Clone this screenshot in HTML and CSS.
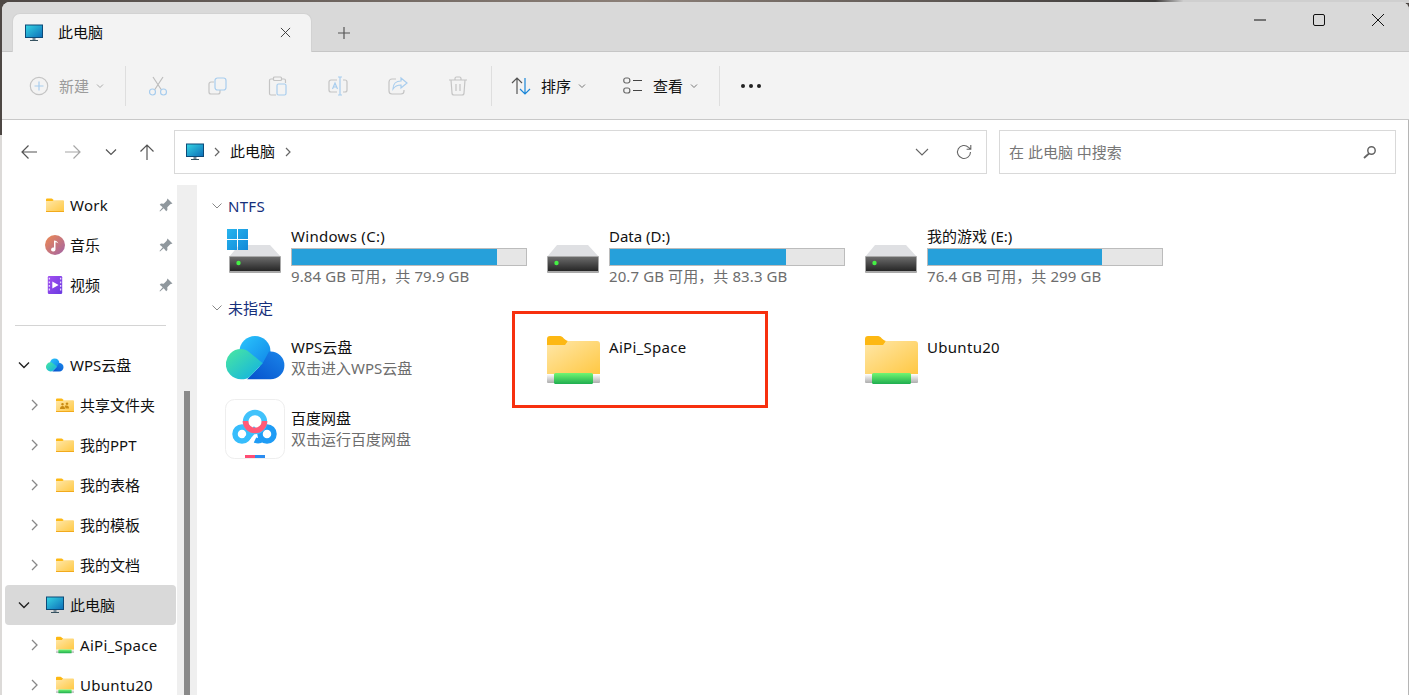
FILE: index.html

```html
<!DOCTYPE html>
<html lang="zh-CN">
<head>
    <meta charset="UTF-8">
    <title>此电脑 - 文件资源管理器</title>
    <link rel="stylesheet" href="styles.css">
</head>
<body>

    <!-- shared icons -->
    <svg class="defs">
        <defs>
            <linearGradient id="gradScreen" x1="0" y1="0" x2="1" y2="1"><stop offset="0" stop-color="#36d6e4"/><stop offset="1" stop-color="#0c6db8"/></linearGradient>
            <linearGradient id="gradFolder" x1="0" y1="0" x2="1" y2="1"><stop offset="0" stop-color="#ffe7a8"/><stop offset="1" stop-color="#ffc843"/></linearGradient>
            <linearGradient id="gradGreen" x1="0" y1="0" x2="0" y2="1"><stop offset="0" stop-color="#72f572"/><stop offset="1" stop-color="#1fae50"/></linearGradient>
            <linearGradient id="gradStrip" x1="0" y1="0" x2="0" y2="1"><stop offset="0" stop-color="#ffffff"/><stop offset="1" stop-color="#aeaeae"/></linearGradient>
            <linearGradient id="gradDrive" x1="0" y1="0" x2="0" y2="1"><stop offset="0" stop-color="#6b6b6b"/><stop offset="1" stop-color="#262626"/></linearGradient>
            <linearGradient id="gradCloud" x1="0" y1="0" x2="1" y2="1"><stop offset="0" stop-color="#2bc6fc"/><stop offset="1" stop-color="#0f84e8"/></linearGradient>
            <linearGradient id="gradTeal" x1="0" y1="0" x2="1" y2="1"><stop offset="0" stop-color="#4be8a0"/><stop offset="1" stop-color="#0eaee6"/></linearGradient>
            <linearGradient id="gradDeep" x1="0" y1="1" x2="1" y2="0"><stop offset="0" stop-color="#0650cc"/><stop offset="1" stop-color="#1a86ea"/></linearGradient>
            <linearGradient id="gradMusic" x1="0" y1="0" x2="1" y2="1"><stop offset="0" stop-color="#ef8a4f"/><stop offset="1" stop-color="#a163a8"/></linearGradient>
            <linearGradient id="gradVideo" x1="0" y1="0" x2="1" y2="1"><stop offset="0" stop-color="#a24ff0"/><stop offset="1" stop-color="#6a3ae0"/></linearGradient>
            <linearGradient id="gradWin" x1="0" y1="0" x2="1" y2="1"><stop offset="0" stop-color="#27b4ee"/><stop offset="1" stop-color="#1289d8"/></linearGradient>

            <symbol id="pc" viewBox="0 0 18 18">
                <rect x="0.5" y="1" width="17" height="12.5" fill="url(#gradScreen)" stroke="#0d4a78"/>
                <rect x="7.5" y="14" width="3" height="2" fill="#7a8a96"/>
                <rect x="5" y="16" width="8" height="1" fill="#35515f"/>
            </symbol>
            <symbol id="folder" viewBox="0 0 18 18">
                <path d="M0 5V3.500a1 1 0 0 1 1-1h4.500c1 0 1.500 1.300 2.500 1.800L7 5z" fill="#fdb813"/>
                <path d="M0 5h6.500l1-.7H17a1 1 0 0 1 1 1V15a1 1 0 0 1-1 1H1a1 1 0 0 1-1-1z" fill="url(#gradFolder)"/>
                <rect x="0" y="15" width="18" height="1" fill="#f2aa1c"/>
            </symbol>
            <symbol id="netfolder" viewBox="0 0 53 48">
                <path d="M0 9V3a3 3 0 0 1 3-3h10c3 0 4 4 8 5l-2 4z" fill="#fdb813"/>
                <path d="M0 9h18l3-4h29a3 3 0 0 1 3 3v30H0z" fill="url(#gradFolder)"/>
                <rect x="0" y="38" width="53" height="9" rx="1" fill="url(#gradStrip)"/>
                <rect x="7" y="37" width="39" height="11" rx="1.500" fill="url(#gradGreen)"/>
            </symbol>
            <symbol id="drive" viewBox="0 0 60 60">
                <path d="M13 19h31l11 12H3z" fill="#dfe0e3"/>
                <rect x="3" y="30" width="52" height="17" rx="1" fill="#a9a9a9"/>
                <rect x="4" y="31" width="50" height="14" fill="url(#gradDrive)"/>
                <circle cx="12.500" cy="37" r="2.200" fill="#45f045"/>
            </symbol>
            <symbol id="wps" viewBox="0 0 60 60">
                <circle cx="29" cy="23.500" r="15.500" fill="url(#gradCloud)"/>
                <path d="M21 51.300H44.500a13.900 13.900 0 0 0 0-27.800h-1.500L36.700 35.300z" fill="url(#gradDeep)"/>
                <path d="M15 21c3 0 6 1 8 3L36.700 35.300 24 48.500c-2 2-5 2.800-9 2.800a15.150 15.150 0 0 1 0-30.300z" fill="url(#gradTeal)"/>
            </symbol>
            <symbol id="pin" viewBox="0 0 14 14">
                <path d="M8.500 0.500l5 5-2.200.8-3 3 .1 2.700-1.200 1.200-2.500-3L1 13.500 0.500 13l3.200-3.700-3-2.500L2 5.600l2.700.1 3-3z" fill="#8f979d"/>
            </symbol>
            <symbol id="chev-down" viewBox="0 0 14 14">
                <path d="M2 4.500l5 5 5-5" fill="none" stroke="#222" stroke-width="1.400"/>
            </symbol>
            <symbol id="chev-right" viewBox="0 0 14 14">
                <path d="M5 2l5 5-5 5" fill="none" stroke="#888" stroke-width="1.300"/>
            </symbol>
        </defs>
    </svg>

    <div class="window">

        <div class="tabbar">
            <div class="tab">
                <svg class="ic18"><use href="#pc"/></svg>
                <span class="tab-title">此电脑</span>
                <svg class="tab-close" viewBox="0 0 12 12"><path d="M1 1l10 10M11 1L1 11" stroke="#333" fill="none"/></svg>
            </div>
            <svg class="tab-plus" viewBox="0 0 12 12"><path d="M6 0v12M0 6h12" stroke="#555" stroke-width="1.200" fill="none"/></svg>
            <div class="win-controls">
                <div class="win-btn"><svg viewBox="0 0 14 14"><path d="M1 7h12" stroke="#111" fill="none"/></svg></div>
                <div class="win-btn"><svg viewBox="0 0 14 14"><rect x="1.500" y="1.500" width="11" height="11" rx="1.500" stroke="#111" fill="none"/></svg></div>
                <div class="win-btn"><svg viewBox="0 0 14 14"><path d="M1 1l12 12M13 1L1 13" stroke="#111" fill="none"/></svg></div>
            </div>
        </div>

        <div class="toolbar">
            <div class="tool tool-new">
                <svg class="ic20" viewBox="0 0 20 20"><circle cx="10" cy="10" r="8.700" fill="none" stroke="#c4c4c4" stroke-width="1.200"/><path d="M10 5.500v9M5.500 10h9" stroke="#a8cdee" stroke-width="1.200"/></svg>
                <span class="tool-label off">新建</span>
                <svg class="caret" viewBox="0 0 8 8"><path d="M1 2.500l3 3 3-3" stroke="#aaa" fill="none"/></svg>
            </div>
            <div class="tool-sep"></div>
            <div class="tool-icons">
                <svg class="ic20" viewBox="0 0 20 20"><path d="M5 1l8.500 13M15 1L6.500 14" stroke="#bdbdbd" fill="none" stroke-width="1.200"/><circle cx="4.500" cy="16" r="3" fill="none" stroke="#a8cdee" stroke-width="1.200"/><circle cx="15.500" cy="16" r="3" fill="none" stroke="#a8cdee" stroke-width="1.200"/></svg>
                <svg class="ic20" viewBox="0 0 20 20"><path d="M6 6H3a2 2 0 0 0-2 2v8a2 2 0 0 0 2 2h7a2 2 0 0 0 2-2v-2" fill="none" stroke="#c4c4c4" stroke-width="1.200"/><rect x="7" y="2" width="11" height="12" rx="2.500" fill="none" stroke="#a8cdee" stroke-width="1.200"/></svg>
                <svg class="ic20" viewBox="0 0 20 20"><path d="M5 3H3a1.500 1.500 0 0 0-1.500 1.500v13A1.500 1.500 0 0 0 3 19h5M14 3h2a1.500 1.500 0 0 1 1.500 1.500V7" fill="none" stroke="#c4c4c4" stroke-width="1.200"/><rect x="5.500" y="1" width="8" height="3.500" rx="1" fill="none" stroke="#c4c4c4" stroke-width="1.200"/><rect x="9" y="8" width="9" height="11" rx="1.500" fill="none" stroke="#a8cdee" stroke-width="1.200"/></svg>
                <svg class="ic20" viewBox="0 0 20 20"><path d="M9 4H3a2 2 0 0 0-2 2v8a2 2 0 0 0 2 2h6M15 4h2a2 2 0 0 1 2 2v8a2 2 0 0 1-2 2h-2" fill="none" stroke="#c4c4c4" stroke-width="1.200"/><path d="M10 1h4M10 19h4M12 1v18M4.500 13l2.500-6 2.500 6M5.500 11h3" fill="none" stroke="#a8cdee" stroke-width="1.200"/></svg>
                <svg class="ic20" viewBox="0 0 20 20"><path d="M8 3H4a3 3 0 0 0-3 3v9a3 3 0 0 0 3 3h9a3 3 0 0 0 3-3v-1" fill="none" stroke="#c4c4c4" stroke-width="1.200"/><path d="M13 2l6 5-6 5V9c-4 0-6 1-8 4 0-5 3-8 8-8z" fill="none" stroke="#a8cdee" stroke-width="1.200"/></svg>
                <svg class="ic20" viewBox="0 0 20 20"><path d="M1 4h18M7 4V2.500A1.500 1.500 0 0 1 8.500 1h3A1.500 1.500 0 0 1 13 2.500V4M3 4l1 13a2 2 0 0 0 2 2h8a2 2 0 0 0 2-2l1-13M8 8v7M12 8v7" fill="none" stroke="#c4c4c4" stroke-width="1.200"/></svg>
            </div>
            <div class="tool-sep"></div>
            <div class="tool tool-sort">
                <svg class="ic20" viewBox="0 0 20 20"><path d="M6 18V2M1 7l5-5 5 5" fill="none" stroke="#555" stroke-width="1.200"/><path d="M14 2v16M9 13l5 5 5-5" fill="none" stroke="#1a86d8" stroke-width="1.200"/></svg>
                <span class="tool-label">排序</span>
                <svg class="caret" viewBox="0 0 8 8"><path d="M1 2.500l3 3 3-3" stroke="#777" fill="none"/></svg>
            </div>
            <div class="tool tool-view">
                <svg class="ic20" viewBox="0 0 20 20"><rect x="0.800" y="2" width="6" height="5" rx="2" fill="none" stroke="#666" stroke-width="1.200"/><rect x="0.800" y="12" width="6" height="5" rx="2" fill="none" stroke="#666" stroke-width="1.200"/><path d="M10 4.500h9M10 14.500h9" stroke="#444" stroke-width="1.200"/></svg>
                <span class="tool-label">查看</span>
                <svg class="caret" viewBox="0 0 8 8"><path d="M1 2.500l3 3 3-3" stroke="#777" fill="none"/></svg>
            </div>
            <div class="tool-sep"></div>
            <svg class="tool-more" viewBox="0 0 22 6"><circle cx="3" cy="3" r="2" fill="#222"/><circle cx="11" cy="3" r="2" fill="#222"/><circle cx="19" cy="3" r="2" fill="#222"/></svg>
        </div>

        <div class="navbar">
            <div class="nav-btns">
                <svg class="ic16" viewBox="0 0 16 16"><path d="M16 8H1M7.500 1.500L1 8l6.500 6.500" fill="none" stroke="#555" stroke-width="1.200"/></svg>
                <svg class="ic16" viewBox="0 0 16 16"><path d="M0 8h15M8.500 1.500L15 8l-6.500 6.500" fill="none" stroke="#a6a6a6" stroke-width="1.200"/></svg>
                <svg class="nav-caret" viewBox="0 0 12 8"><path d="M1 1.500l5 5 5-5" fill="none" stroke="#555" stroke-width="1.200"/></svg>
                <svg class="ic16" viewBox="0 0 16 16"><path d="M8 16V1M1.500 7.500L8 1l6.500 6.500" fill="none" stroke="#555" stroke-width="1.200"/></svg>
            </div>
            <div class="address">
                <svg class="ic18"><use href="#pc"/></svg>
                <svg class="crumb" viewBox="0 0 6 10"><path d="M1 1l4 4-4 4" fill="none" stroke="#666" stroke-width="1.200"/></svg>
                <span class="crumb-text">此电脑</span>
                <svg class="crumb" viewBox="0 0 6 10"><path d="M1 1l4 4-4 4" fill="none" stroke="#666" stroke-width="1.200"/></svg>
                <svg class="addr-drop" viewBox="0 0 14 8"><path d="M1 1l6 6 6-6" fill="none" stroke="#666" stroke-width="1.100"/></svg>
                <svg class="addr-refresh" viewBox="0 0 16 16"><path d="M14.500 8a6.500 6.500 0 1 1-2-4.700L14.500 5M14.800 1v4.200h-4.200" fill="none" stroke="#666" stroke-width="1.100"/></svg>
            </div>
            <div class="search">
                <span class="search-text">在 此电脑 中搜索</span>
                <svg class="search-ic" viewBox="0 0 14 14"><circle cx="8.500" cy="5.500" r="3.700" fill="none" stroke="#666" stroke-width="1.500"/><path d="M6 8.500L1 13" stroke="#666" stroke-width="1.800"/></svg>
            </div>
        </div>

        <div class="body-row">
            <div class="sidebar">
                <div class="side-row">
                    <span class="chev"></span>
                    <svg class="ic18"><use href="#folder"/></svg>
                    <span class="side-label latin">Work</span>
                    <svg class="pin"><use href="#pin"/></svg>
                </div>
                <div class="side-row">
                    <span class="chev"></span>
                    <svg class="ic20 side-ic" viewBox="0 0 20 20"><circle cx="10" cy="10" r="10" fill="url(#gradMusic)"/><path d="M9 14.500V5.500c2 0 3.500 1 4.500 3-1-.8-2-1.200-3-1.200v7.200a2.200 2 0 1 1-1.500-1.900z" fill="#fff"/></svg>
                    <span class="side-label">音乐</span>
                    <svg class="pin"><use href="#pin"/></svg>
                </div>
                <div class="side-row">
                    <span class="chev"></span>
                    <svg class="ic18" viewBox="0 0 18 20"><rect x="1" y="0" width="16" height="20" rx="1.500" fill="url(#gradVideo)"/><path d="M2 2h1.500v2H2zM2 6h1.500v2H2zM2 10h1.500v2H2zM2 14h1.500v2H2zM14.500 2H16v2h-1.500zM14.500 6H16v2h-1.500zM14.500 10H16v2h-1.500zM14.500 14H16v2h-1.500z" fill="#e6d4ff"/><path d="M6 6l7 4-7 4z" fill="#fff"/></svg>
                    <span class="side-label">视频</span>
                    <svg class="pin"><use href="#pin"/></svg>
                </div>
                <div class="side-sep"></div>
                <div class="side-row">
                    <span class="chev"><svg><use href="#chev-down"/></svg></span>
                    <svg class="ic18"><use href="#wps"/></svg>
                    <span class="side-label">WPS云盘</span>
                </div>
                <div class="side-row sub">
                    <span class="chev"><svg><use href="#chev-right"/></svg></span>
                    <svg class="ic18" viewBox="0 0 18 18"><use href="#folder" width="18" height="18"/><path d="M6.500 9.500a1.300 1.300 0 1 1 .01 0zM11 9a1.300 1.300 0 1 1 .01 0zM4 13c0-2 1-3 2.500-3S9 11 9 13zM9.500 12.500c0-1.200-.3-2-.8-2.600.6-.4 1.300-.5 2-.4 1.500 0 2.300 1.300 2.300 3z" fill="#c98a12"/></svg>
                    <span class="side-label">共享文件夹</span>
                </div>
                <div class="side-row sub">
                    <span class="chev"><svg><use href="#chev-right"/></svg></span>
                    <svg class="ic18"><use href="#folder"/></svg>
                    <span class="side-label">我的PPT</span>
                </div>
                <div class="side-row sub">
                    <span class="chev"><svg><use href="#chev-right"/></svg></span>
                    <svg class="ic18"><use href="#folder"/></svg>
                    <span class="side-label">我的表格</span>
                </div>
                <div class="side-row sub">
                    <span class="chev"><svg><use href="#chev-right"/></svg></span>
                    <svg class="ic18"><use href="#folder"/></svg>
                    <span class="side-label">我的模板</span>
                </div>
                <div class="side-row sub">
                    <span class="chev"><svg><use href="#chev-right"/></svg></span>
                    <svg class="ic18"><use href="#folder"/></svg>
                    <span class="side-label">我的文档</span>
                </div>
                <div class="side-row selected">
                    <span class="chev"><svg><use href="#chev-down"/></svg></span>
                    <svg class="ic18"><use href="#pc"/></svg>
                    <span class="side-label">此电脑</span>
                </div>
                <div class="side-row sub">
                    <span class="chev"><svg><use href="#chev-right"/></svg></span>
                    <svg class="ic18"><use href="#netfolder"/></svg>
                    <span class="side-label latin">AiPi_Space</span>
                </div>
                <div class="side-row sub">
                    <span class="chev"><svg><use href="#chev-right"/></svg></span>
                    <svg class="ic18"><use href="#netfolder"/></svg>
                    <span class="side-label latin">Ubuntu20</span>
                </div>
            </div>

            <div class="scrollbar"><div class="scroll-thumb"></div></div>

            <div class="content">
                <div class="group-head">
                    <svg class="group-chev" viewBox="0 0 10 6"><path d="M0.500 0.500L5 5l4.500-4.500" fill="none" stroke="#888"/></svg>
                    <span class="latin">NTFS</span>
                </div>
                <div class="tiles drives">
                    <div class="tile">
                        <svg class="ic60" viewBox="0 0 60 60">
                            <use href="#drive"/>
                            <path d="M1 3h10v10H1zM12 3h10v10H12zM1 14h10v10H1zM12 14h10v10H12z" fill="url(#gradWin)"/>
                        </svg>
                        <div class="tile-text">
                            <div class="tile-name latin">Windows (C:)</div>
                            <div class="bar"><div class="bar-fill" style="width: 87.7%"></div></div>
                            <div class="tile-sub">9.84 GB 可用，共 79.9 GB</div>
                        </div>
                    </div>
                    <div class="tile">
                        <svg class="ic60" viewBox="0 0 60 60"><use href="#drive"/></svg>
                        <div class="tile-text">
                            <div class="tile-name">Data (D:)</div>
                            <div class="bar"><div class="bar-fill" style="width: 75.1%"></div></div>
                            <div class="tile-sub">20.7 GB 可用，共 83.3 GB</div>
                        </div>
                    </div>
                    <div class="tile">
                        <svg class="ic60" viewBox="0 0 60 60"><use href="#drive"/></svg>
                        <div class="tile-text">
                            <div class="tile-name">我的游戏 (E:)</div>
                            <div class="bar"><div class="bar-fill" style="width: 74.4%"></div></div>
                            <div class="tile-sub">76.4 GB 可用，共 299 GB</div>
                        </div>
                    </div>
                </div>

                <div class="group-head">
                    <svg class="group-chev" viewBox="0 0 10 6"><path d="M0.500 0.500L5 5l4.500-4.500" fill="none" stroke="#888"/></svg>
                    <span>未指定</span>
                </div>
                <div class="tiles others">
                    <div class="tile">
                        <svg class="ic60"><use href="#wps"/></svg>
                        <div class="tile-text">
                            <div class="tile-name">WPS云盘</div>
                            <div class="tile-sub">双击进入WPS云盘</div>
                        </div>
                    </div>
                    <div class="tile">
                        <svg class="ic60" viewBox="0 0 60 60"><use href="#netfolder" x="3" y="8" width="53" height="48"/></svg>
                        <div class="tile-text">
                            <div class="tile-name latin">AiPi_Space</div>
                        </div>
                    </div>
                    <div class="tile">
                        <svg class="ic60" viewBox="0 0 60 60"><use href="#netfolder" x="3" y="8" width="53" height="48"/></svg>
                        <div class="tile-text">
                            <div class="tile-name latin">Ubuntu20</div>
                        </div>
                    </div>
                    <div class="tile">
                        <svg class="ic60 baidu" viewBox="1 0 60 60">
                            <rect x="0.500" y="0.500" width="59" height="59" rx="9" fill="#fff" stroke="#eeeeee"/>
                            <circle cx="17" cy="35" r="7" fill="none" stroke="#37bdfc" stroke-width="5.500"/>
                            <circle cx="42" cy="35" r="7" fill="none" stroke="#1f9cf5" stroke-width="5.500"/>
                            <path d="M21.500 40L31 29" fill="none" stroke="#37bdfc" stroke-width="5.500"/>
                            <path d="M30 41c2 1 5 1 7-1" fill="none" stroke="#1f9cf5" stroke-width="5.500"/>
                            <circle cx="30" cy="23" r="9.500" fill="none" stroke="#41c2fb" stroke-width="5.500"/>
                            <path d="M20.500 22a9.500 9.500 0 0 0 19 0" fill="none" stroke="#ff5a78" stroke-width="5.500"/>
                            <rect x="20" y="56" width="10" height="3" fill="#ff4d74"/>
                            <rect x="30" y="56" width="10" height="3" fill="#2b8cf0"/>
                        </svg>
                        <div class="tile-text">
                            <div class="tile-name">百度网盘</div>
                            <div class="tile-sub">双击运行百度网盘</div>
                        </div>
                    </div>
                </div>

                <!-- red annotation box around the shared folder -->
                <div class="mark"></div>
            </div>
        </div>
    </div>

</body>
</html>
```

FILE: styles.css

```css
* {
    margin: 0;
    padding: 0;
    box-sizing: border-box;
}
html, body {
    height: 100%;
    overflow: hidden;
}
body {
    font-family: "Noto Sans", "Noto Sans CJK SC", sans-serif;
    font-size: 15px;
    line-height: 20px;
    color: #111;
    background:
        linear-gradient(90deg, #4d4744 0, #8c8078 45%, #3d3b3a 82%, #cfcfcf 84%) top left / 100% 3px no-repeat,
        linear-gradient(180deg, #4d4744 0, #4d4744 135px, #dcdad8 135px);
    padding: 2px 0 0 2px;
}
svg {
    display: block;
    flex-shrink: 0;
}
.defs {
    position: absolute;
    width: 0;
    height: 0;
}
.ic16 { width: 16px; height: 16px; }
.ic18 { width: 18px; height: 18px; }
.ic20 { width: 20px; height: 20px; }
.ic60 { width: 60px; height: 60px; }
.latin {
    letter-spacing: 0.3px;
}

.window {
    height: 693px;
    background: white;
    border-top-left-radius: 8px;
    border-top-right-radius: 8px;
    overflow: hidden;
    box-shadow: inset -1px 0 0 #b5b5b5;
    display: flex;
    flex-direction: column;
}

/* Tab bar */
.tabbar {
    height: 50px;
    flex-shrink: 0;
    background: #d9d9d9;
    border-bottom: 1px solid #c6c6c6;
    display: flex;
    align-items: flex-start;
}
.tab {
    width: 300px;
    height: 39px;
    margin: 11px 0 0 10px;
    padding: 0 20px 0 12px;
    background: #f3f3f3;
    border: 1px solid #d2d2d2;
    border-bottom: none;
    border-radius: 8px 8px 0 0;
    display: flex;
    align-items: center;
}
.tab-title {
    margin-left: 15px;
    margin-top: -2px;
}
.tab-close {
    width: 11px;
    height: 11px;
    margin-left: auto;
    margin-top: -2px;
}
.tab-plus {
    width: 12px;
    height: 12px;
    margin: 25px 0 0 26px;
}
.win-controls {
    margin-left: auto;
    margin-right: 2px;
    display: flex;
}
.win-btn {
    width: 59px;
    height: 36px;
    display: flex;
    align-items: center;
    justify-content: center;
}
.win-btn svg {
    width: 14px;
    height: 14px;
}

/* Command bar */
.toolbar {
    height: 68px;
    flex-shrink: 0;
    background: #f3f3f3;
    border-bottom: 1px solid #c8c8c8;
    display: flex;
    align-items: center;
}
.tool {
    display: flex;
    align-items: center;
}
.tool-new {
    width: 123px;
    padding-left: 27px;
}
.tool-label {
    margin-left: 10px;
}
.tool-label.off {
    color: #9b9b9b;
}
.caret {
    width: 8px;
    height: 8px;
    margin-left: 7px;
}
.tool-sep {
    width: 1px;
    height: 40px;
    background: #dedede;
}
.tool-icons {
    width: 365px;
    padding-left: 22px;
    display: flex;
    gap: 40px;
}
.tool-sort {
    width: 131px;
    padding-left: 19px;
}
.tool-view {
    width: 96px;
}
.tool-more {
    width: 22px;
    height: 6px;
    margin-left: 20px;
}

/* Navigation row */
.navbar {
    height: 65px;
    flex-shrink: 0;
    padding: 10px 12px 0 0;
    display: flex;
    align-items: flex-start;
}
.nav-btns {
    width: 172px;
    height: 44px;
    padding-left: 19px;
    display: flex;
    align-items: center;
}
.nav-btns svg:nth-child(2) {
    margin-left: 28px;
}
.nav-caret {
    width: 12px;
    height: 8px;
    margin: 0 22px 0 24px;
}
.address {
    width: 813px;
    height: 44px;
    padding: 0 14px 0 11px;
    border: 1px solid #d9d9d9;
    display: flex;
    align-items: center;
}
.crumb {
    width: 6px;
    height: 10px;
}
.address .ic18 {
    margin-right: 10px;
}
.crumb-text {
    margin: -2px 10px 0 10px;
}
.addr-drop {
    width: 14px;
    height: 8px;
    margin-left: auto;
}
.addr-refresh {
    width: 16px;
    height: 16px;
    margin-left: 27px;
}
.search {
    width: 397px;
    height: 44px;
    margin-left: 12px;
    padding: 0 18px 0 9px;
    border: 1px solid #d9d9d9;
    display: flex;
    align-items: center;
    justify-content: space-between;
}
.search-text {
    color: #777;
    margin-top: -1px;
}
.search-ic {
    width: 14px;
    height: 14px;
}

/* Main area */
.body-row {
    flex: 1;
    min-height: 0;
    display: flex;
}
.sidebar {
    width: 175px;
    flex-shrink: 0;
    overflow: hidden;
    padding: 0 1px 0 3px;
}
.side-row {
    height: 40px;
    flex-shrink: 0;
    padding: 0 3px 0 11px;
    border-radius: 4px;
    display: flex;
    align-items: center;
}
.side-row.sub {
    padding-left: 21px;
}
.side-row.selected {
    background: #d9d9d9;
}
.chev {
    width: 30px;
    flex-shrink: 0;
}
.chev svg {
    width: 14px;
    height: 14px;
    margin-left: 1px;
}
.side-ic {
    margin-left: -1px;
    margin-right: -1px;
}
.side-label {
    margin-left: 6px;
    margin-top: -1px;
    white-space: nowrap;
}
.pin {
    width: 14px;
    height: 14px;
    margin-left: auto;
}
.side-sep {
    height: 1px;
    margin: 20px 10px 19px 10px;
    background: #d4d4d4;
}
.scrollbar {
    width: 20px;
    flex-shrink: 0;
    padding-top: 206px;
    background: #efefef;
    display: flex;
    justify-content: center;
}
.scroll-thumb {
    width: 6px;
    height: 100%;
    background: #8a8a8a;
}
.content {
    flex: 1;
    position: relative;
    padding: 11px 0 0 29px;
}
.group-head {
    height: 20px;
    margin-left: -14px;
    color: #16307c;
    display: flex;
    align-items: center;
    gap: 6px;
}
.group-chev {
    width: 10px;
    height: 6px;
}
.tiles {
    display: grid;
    grid-template-columns: repeat(3, 318px);
    margin-top: 10px;
}
.drives {
    margin-bottom: 12px;
}
.others {
    row-gap: 11px;
}
.tile {
    display: flex;
    align-items: center;
}
.drives .tile {
    align-items: flex-start;
}
.drives .tile-sub {
    letter-spacing: 0.1px;
}
.tile-text {
    margin-left: 5px;
    width: 236px;
    min-height: 42px;
}
.others .tile-text {
    line-height: 21px;
}
.tile-sub {
    color: #6d6d6d;
}
.baidu {
    overflow: visible;
}
.bar {
    height: 18px;
    margin-top: 2px;
    border: 1px solid #bcbcbc;
    background: #e6e6e6;
}
.bar-fill {
    height: 100%;
    background: #26a0da;
}
.mark {
    position: absolute;
    left: 315px;
    top: 126px;
    width: 256px;
    height: 97px;
    border: 3px solid #f7300f;
}
```
